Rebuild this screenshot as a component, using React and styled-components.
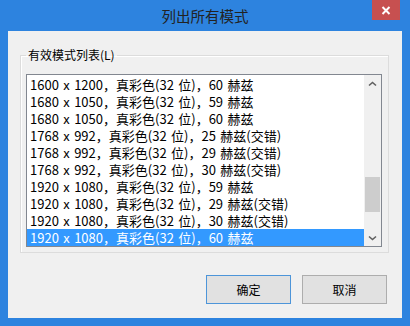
import React from "react";
import styled, { createGlobalStyle } from "styled-components";

const GlobalStyle = createGlobalStyle`
  body {
    margin: 0;
    font-family: "Noto Sans CJK SC", "Noto Sans", sans-serif;
  }
`;

const Window = styled.div`
  width: 410px;
  height: 326px;
  box-sizing: border-box;
  padding: 0 8px 8px;
  background: #2d83df;
  display: flex;
  flex-direction: column;
`;

const TitleBar = styled.div`
  height: 31px;
  flex-shrink: 0;
  display: grid;
  grid-template-columns: 1fr auto 1fr;
`;

const Title = styled.div`
  grid-column: 2;
  align-self: center;
  font-size: 14.5px;
  color: #222;
`;

const CloseButton = styled.div`
  grid-column: 3;
  justify-self: end;
  width: 28px;
  height: 20px;
  margin-right: 2px;
  background: #c75050;
  display: flex;
  align-items: center;
  justify-content: center;
`;

const Client = styled.div`
  flex: 1;
  background: #f0f0f0;
  padding: 16px 13px 0 12px;
  display: flex;
  flex-direction: column;
`;

const Group = styled.fieldset`
  margin: 0;
  padding: 0 6px 5px 5px;
  border: 1px solid #dcdcdc;
  box-shadow: inset 1px 1px 0 #fff;
`;

const Legend = styled.legend`
  padding: 0 2px;
  font-size: 12px;
  line-height: 16px;
  color: #000;
`;

const ListBox = styled.div`
  margin-top: 11px;
  width: 356px;
  height: 173px;
  box-sizing: border-box;
  border: 1px solid #828790;
  background: #fff;
  display: flex;
`;

const Rows = styled.div`
  flex: 1;
  padding-top: 1px;
`;

const Row = styled.div`
  height: 17px;
  line-height: 17px;
  padding-left: 3px;
  font-size: 13px;
  word-spacing: 1.5px;
  white-space: nowrap;
  overflow: hidden;
  color: ${(p) => (p.$selected ? "#fff" : "#000")};
  background: ${(p) => (p.$selected ? "#3399ff" : "transparent")};
`;

const ScrollBar = styled.div`
  width: 17px;
  background: #f0f0f0;
  display: flex;
  flex-direction: column;
`;

const ArrowBox = styled.div`
  height: 17px;
  display: flex;
  align-items: center;
  justify-content: center;
`;

const Track = styled.div`
  flex: 1;
`;

const Thumb = styled.div`
  margin: 0 1px;
  height: 35px;
  background: #cdcdcd;
`;

const ButtonRow = styled.div`
  display: flex;
  justify-content: flex-end;
  gap: 11px;
  margin-top: 22px;
  padding-right: 2px;
`;

const Button = styled.div`
  width: 85px;
  height: 29px;
  box-sizing: border-box;
  border: 1px solid ${(p) => (p.$default ? "#4d95d9" : "#adadad")};
  background: #e1e1e1;
  display: flex;
  align-items: center;
  justify-content: center;
  font-size: 12px;
  color: #000;
`;

const Chevron = ({ down }) => (
  <svg width="9" height="6" viewBox="0 0 9 6">
    <path
      d={down ? "M1 1.5 L4.5 4.5 L8 1.5" : "M1 4.5 L4.5 1.5 L8 4.5"}
      fill="none"
      stroke="#606060"
      strokeWidth="1.6"
    />
  </svg>
);

const modes = [
  "1600 x 1200，真彩色(32 位)，60 赫兹",
  "1680 x 1050，真彩色(32 位)，59 赫兹",
  "1680 x 1050，真彩色(32 位)，60 赫兹",
  "1768 x 992，真彩色(32 位)，25 赫兹(交错)",
  "1768 x 992，真彩色(32 位)，29 赫兹(交错)",
  "1768 x 992，真彩色(32 位)，30 赫兹(交错)",
  "1920 x 1080，真彩色(32 位)，59 赫兹",
  "1920 x 1080，真彩色(32 位)，29 赫兹(交错)",
  "1920 x 1080，真彩色(32 位)，30 赫兹(交错)",
  "1920 x 1080，真彩色(32 位)，60 赫兹",
];

const App = () => {
  const selected = modes.length - 1;
  const thumbTop = 85;

  return (
    <>
      <GlobalStyle />
      <Window>
        <TitleBar>
          <Title>列出所有模式</Title>
          <CloseButton>
            <svg width="10" height="9" viewBox="0 0 10 9">
              <path d="M1.5 1 L8.5 8 M8.5 1 L1.5 8" stroke="#fff" strokeWidth="2" />
            </svg>
          </CloseButton>
        </TitleBar>
        <Client>
          <Group>
            <Legend>有效模式列表(L)</Legend>
            <ListBox>
              <Rows>
                {modes.map((m, i) => (
                  <Row key={i} $selected={i === selected}>
                    {m}
                  </Row>
                ))}
              </Rows>
              <ScrollBar>
                <ArrowBox>
                  <Chevron />
                </ArrowBox>
                <Track>
                  <Thumb style={{ marginTop: thumbTop }} />
                </Track>
                <ArrowBox>
                  <Chevron down />
                </ArrowBox>
              </ScrollBar>
            </ListBox>
          </Group>
          <ButtonRow>
            <Button $default>确定</Button>
            <Button>取消</Button>
          </ButtonRow>
        </Client>
      </Window>
    </>
  );
};

export default App;
